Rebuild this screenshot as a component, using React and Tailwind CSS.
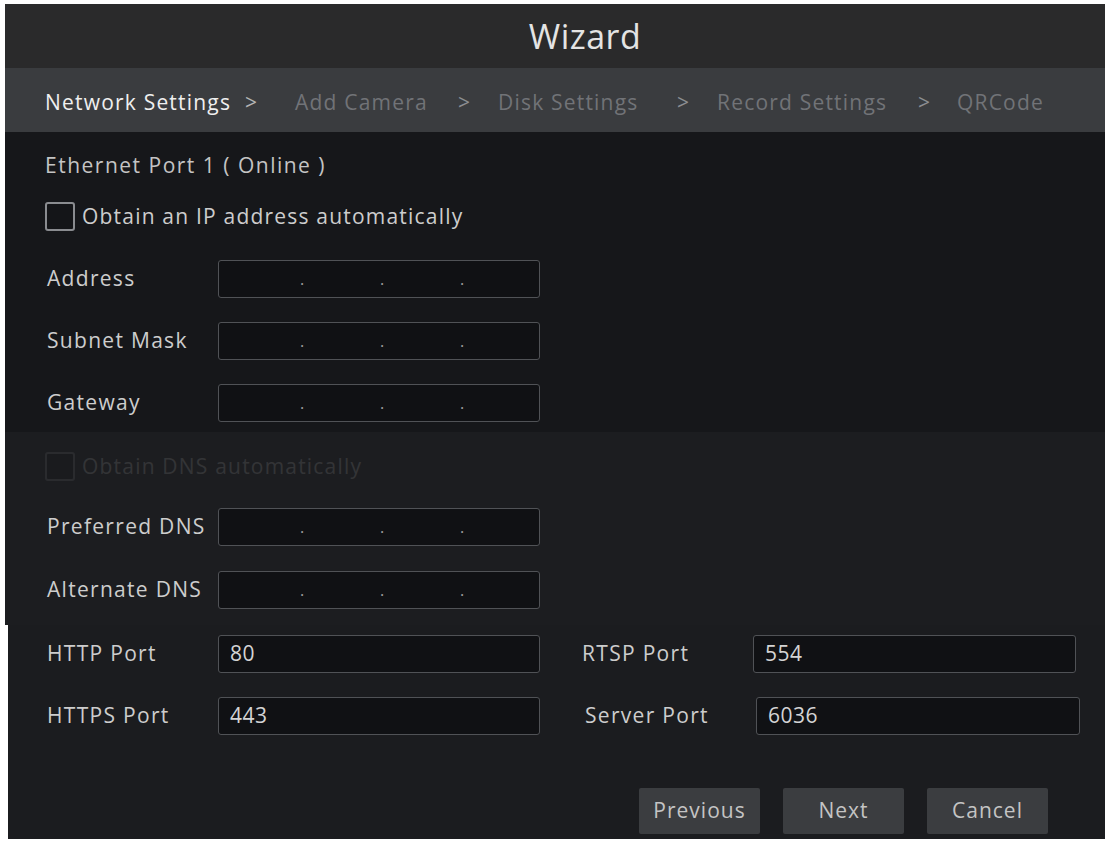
import React from 'react';

// step label, then its box width so the row lines up with the picture
const STEPS = [
  { label: 'Network Settings', w: 'w-[200px]' },
  { label: '>', w: 'w-[50px]' },
  { label: 'Add Camera', w: 'w-[163px]' },
  { label: '>', w: 'w-[40px]' },
  { label: 'Disk Settings', w: 'w-[179px]' },
  { label: '>', w: 'w-[40px]' },
  { label: 'Record Settings', w: 'w-[201px]' },
  { label: '>', w: 'w-[39px]' },
  { label: 'QRCode', w: '' },
];

function Checkbox({ label, disabled }) {
  return (
    <div className={`h-[30px] flex items-center gap-[7px] ${disabled ? 'opacity-[0.13]' : ''}`}>
      <span className="w-[30px] h-[29px] rounded-[3px] border-2 border-[#8a8c90] bg-[#141518]" />
      <span className="text-[21px] leading-[30px] tracking-[1.2px] text-[#cdcdcd]">{label}</span>
    </div>
  );
}

function IpInput() {
  return (
    <div className="w-[322px] h-[38px] rounded-[3px] border border-[#505256] bg-[#101114] flex items-center">
      <span className="w-[81px]" />
      <span className="w-[80px] text-[#a0a0a0] text-[16px] leading-none">.</span>
      <span className="w-[80px] text-[#a0a0a0] text-[16px] leading-none">.</span>
      <span className="text-[#a0a0a0] text-[16px] leading-none">.</span>
    </div>
  );
}

function TextInput({ value, width = 'w-[322px]' }) {
  return (
    <div className={`${width} h-[38px] rounded-[3px] border border-[#505256] bg-[#101114] flex items-center px-[11px] text-[21px] tracking-[0.5px] text-[#d4d4d4]`}>
      {value}
    </div>
  );
}

function Row({ label, children, labelWidth = 'w-[171px]' }) {
  return (
    <div className="flex items-center">
      <span className={`${labelWidth} text-[21px] tracking-[1.3px] text-[#cdcdcd]`}>{label}</span>
      {children}
    </div>
  );
}

function Button({ children }) {
  return (
    <button
      type="button"
      className="w-[121px] h-[46px] bg-[#3b3d40] text-[21px] tracking-[1px] text-[#c4c4c4] rounded-[2px]"
    >
      {children}
    </button>
  );
}

export default function App() {
  return (
    <div
      className="w-[1107px] h-[843px] bg-white pt-[4px] pb-[4px] pl-[5px] pr-[2px] flex flex-col"
      style={{ fontFamily: '"Open Sans", "Noto Sans", sans-serif' }}
    >
      {/* Title */}
      <div className="h-[64px] bg-[#2a2a2b] flex items-center justify-center pl-[60px]">
        <span className="text-[34px] tracking-[0.5px] text-[#e4e4e4]">Wizard</span>
      </div>

      {/* Steps */}
      <div className="h-[64px] bg-[#3a3c3f] flex items-center pl-[40px] pt-[6px] text-[21px] tracking-[1.2px]">
        {STEPS.map((step, i) => (
          <span
            key={i}
            className={`${step.w} whitespace-nowrap ${
              i === 0 ? 'text-[#efefef]' : i === 1 ? 'text-[#b4b4b4]' : step.label === '>' ? 'text-[#8c8e92]' : 'text-[#717377]'
            }`}
          >
            {step.label}
          </span>
        ))}
      </div>

      {/* IP section */}
      <div className="h-[300px] bg-[#16171a] pl-[40px] pt-[20px] flex flex-col">
        <span className="h-[26px] leading-[26px] text-[21px] tracking-[1.5px] text-[#c4c4c4]">Ethernet Port 1 ( Online )</span>
        <div className="mt-[23px]">
          <Checkbox label="Obtain an IP address automatically" />
        </div>
        <div className="mt-[29px] flex flex-col gap-[24px] pl-[2px]">
          <Row label="Address"><IpInput /></Row>
          <Row label="Subnet Mask"><IpInput /></Row>
          <Row label="Gateway"><IpInput /></Row>
        </div>
      </div>

      {/* DNS section */}
      <div className="h-[193px] bg-[#1c1d20] pl-[40px] pt-[19px] flex flex-col">
        <Checkbox label="Obtain DNS automatically" disabled />
        <div className="mt-[27px] flex flex-col gap-[25px] pl-[2px]">
          <Row label="Preferred DNS"><IpInput /></Row>
          <Row label="Alternate DNS"><IpInput /></Row>
        </div>
      </div>

      {/* Ports + buttons */}
      <div className="flex-1 ml-[3px] bg-[#1b1c1f] pl-[39px] pt-[10px] flex flex-col">
        <div className="flex flex-col gap-[24px]">
          <div className="flex items-center">
            <Row label="HTTP Port"><TextInput value="80" /></Row>
            <div className="ml-[42px]">
              <Row label="RTSP Port"><TextInput value="554" width="w-[323px]" /></Row>
            </div>
          </div>
          <div className="flex items-center">
            <Row label="HTTPS Port"><TextInput value="443" /></Row>
            <div className="ml-[45px]">
              <Row label="Server Port"><TextInput value="6036" width="w-[324px]" /></Row>
            </div>
          </div>
        </div>
        <div className="mt-[53px] flex justify-end gap-[23px] pr-[57px]">
          <Button>Previous</Button>
          <Button>Next</Button>
          <Button>Cancel</Button>
        </div>
      </div>
    </div>
  );
}
